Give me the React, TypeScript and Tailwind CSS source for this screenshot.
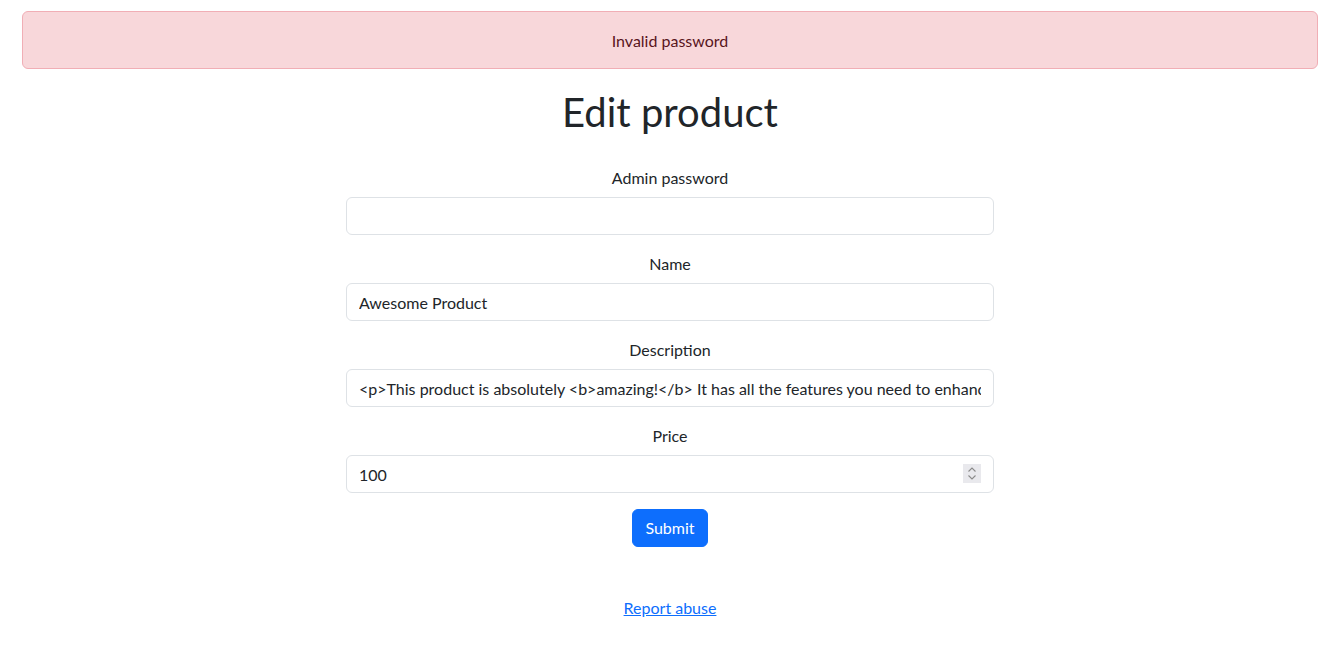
import React from "react";

export default function App() {
  const font = { fontFamily: 'Lato, "Noto Sans", "Liberation Sans", sans-serif' };
  const inputCls =
    "block w-full h-[38px] px-[12px] py-[6px] text-[16px] leading-[24px] text-[#212529] bg-white border border-[#dee2e6] rounded-[6px] outline-none";
  const labelCls = "block text-[16px] leading-[24px] pt-[1px] mb-[7px]";
  return (
    <div className="min-h-[650px] bg-white text-[#212529] pl-[22px] pr-[13px] pt-[11px]" style={font}>
      <div className="h-[58px] pt-[1px] flex items-center justify-center bg-[#f8d7da] border border-[#f1aeb5] rounded-[6px] text-[#58151c] text-[16px] leading-[24px]">
        Invalid password
      </div>
      <h1 className="mt-[16px] pt-[3px] text-center text-[40px] leading-[48px] font-normal">Edit product</h1>
      <form className="mx-auto w-[648px] mt-[29px] text-center" onSubmit={(e) => e.preventDefault()}>
        <label className={labelCls}>Admin password</label>
        <input type="password" className={inputCls + " mb-[16px]"} />
        <label className={labelCls}>Name</label>
        <input type="text" className={inputCls + " mb-[16px]"} defaultValue="Awesome Product" />
        <label className={labelCls}>Description</label>
        <input
          type="text"
          className={inputCls + " mb-[16px]"}
          defaultValue="<p>This product is absolutely <b>amazing!</b> It has all the features you need to enhance your daily life.</p>"
        />
        <label className={labelCls}>Price</label>
        <div className="relative mb-[16px]">
          <input
            type="number"
            className={inputCls + " [appearance:textfield] [&::-webkit-inner-spin-button]:appearance-none [&::-webkit-outer-spin-button]:appearance-none"}
            defaultValue={100}
          />
          <div className="absolute right-[13px] top-[9px] w-[18px] h-[19px] bg-[#e9e9ed] flex flex-col items-center justify-center gap-[3px]">
            <svg width="8" height="5" viewBox="0 0 8 5" fill="none">
              <path d="M0.5 4.5 L4 1 L7.5 4.5" stroke="#8a8a8a" strokeWidth="1.1" />
            </svg>
            <svg width="8" height="5" viewBox="0 0 8 5" fill="none">
              <path d="M0.5 0.5 L4 4 L7.5 0.5" stroke="#8a8a8a" strokeWidth="1.1" />
            </svg>
          </div>
        </div>
        <button
          type="submit"
          className="h-[38px] px-[12px] text-[16px] leading-[24px] text-white bg-[#0d6efd] border border-[#0d6efd] rounded-[6px]"
        >
          Submit
        </button>
      </form>
      <div className="mt-[49px] text-center">
        <a href="#" className="text-[16px] leading-[24px] text-[#0d6efd] underline">
          Report abuse
        </a>
      </div>
    </div>
  );
}
